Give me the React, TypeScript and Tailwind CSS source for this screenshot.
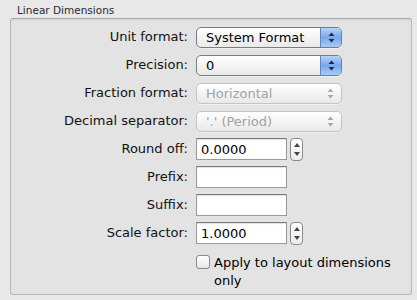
import React from "react";

const font = { fontFamily: '"DejaVu Sans", "Liberation Sans", sans-serif' };

const Arrows = ({ color }: { color: string }) => (
  <svg width="7" height="11" viewBox="0 0 7 11">
    <path d="M3.5 0.5 L6.5 4 L0.5 4 Z" fill={color} />
    <path d="M3.5 10.5 L6.5 7 L0.5 7 Z" fill={color} />
  </svg>
);

const Popup = ({ value, disabled }: { value: string; disabled?: boolean }) => (
  <div
    className={`flex h-[21px] w-[146px] items-stretch rounded-[5px] border ${
      disabled ? "border-[#c4c4c4] text-[#a2a2a2]" : "border-[#7c7c7c] text-black"
    } bg-gradient-to-b from-white via-[#f4f4f4] to-[#e9e9e9] shadow-[0_1px_0_rgba(255,255,255,0.5)] overflow-hidden`}
  >
    <div className="flex flex-1 items-center pl-[9px] leading-none">{value}</div>
    {disabled ? (
      <div className="flex w-[21px] items-center justify-center">
        <Arrows color="#a8a8a8" />
      </div>
    ) : (
      <div className="flex w-[21px] items-center justify-center border-l border-[#5d86c4] bg-gradient-to-b from-[#b8d3f6] via-[#78a8ec] to-[#a7cbf6]">
        <Arrows color="#1c2a44" />
      </div>
    )}
  </div>
);

const Field = ({ value }: { value?: string }) => (
  <div className="flex h-[22px] w-[91px] items-center border border-[#9a9a9a] border-t-[#7a7a7a] bg-white pl-[4px] leading-none text-black shadow-[inset_0_1px_1px_rgba(0,0,0,0.12)]">
    {value}
  </div>
);

const Stepper = () => (
  <div className="ml-[3px] flex h-[23px] w-[13px] flex-col items-center justify-center gap-[5px] rounded-[4px] border border-[#8a8a8a] bg-gradient-to-b from-white to-[#ececec]">
    <svg width="6" height="4" viewBox="0 0 6 4">
      <path d="M3 0 L6 4 L0 4 Z" fill="#444" />
    </svg>
    <svg width="6" height="4" viewBox="0 0 6 4">
      <path d="M3 4 L6 0 L0 0 Z" fill="#444" />
    </svg>
  </div>
);

const rows: { label: string; control: React.ReactNode }[] = [
  { label: "Unit format:", control: <Popup value="System Format" /> },
  { label: "Precision:", control: <Popup value="0" /> },
  { label: "Fraction format:", control: <Popup value="Horizontal" disabled /> },
  { label: "Decimal separator:", control: <Popup value="'.' (Period)" disabled /> },
  { label: "Round off:", control: <div className="flex items-center"><Field value="0.0000" /><Stepper /></div> },
  { label: "Prefix:", control: <Field /> },
  { label: "Suffix:", control: <Field /> },
  { label: "Scale factor:", control: <div className="flex items-center"><Field value="1.0000" /><Stepper /></div> },
];

export default function App() {
  return (
    <div className="h-[300px] w-[417px] bg-[#e8e8e8] pt-[4px]" style={font}>
      <div className="pl-[17px] text-[10.5px] leading-[13px] text-[#2a2a2a]">Linear Dimensions</div>
      <div className="ml-[10px] mt-[1px] h-[277px] w-[402px] rounded-[3px] border border-[#b9b9b9] border-t-[#a9a9a9] bg-[#e3e3e3] pt-[4px] text-[13px] shadow-[inset_0_1px_2px_rgba(0,0,0,0.08)]">
        <div className="grid grid-cols-[177px_1fr] gap-x-[8px]">
          {rows.map((r, i) => (
            <React.Fragment key={i}>
              <div className="flex h-[28px] items-center justify-end text-[#111]">{r.label}</div>
              <div className="flex h-[28px] items-center">{r.control}</div>
            </React.Fragment>
          ))}
          <div />
          <div className="flex items-start pt-[7px]">
            <div className="mt-[1px] h-[14px] w-[14px] shrink-0 rounded-[3px] border border-[#8a8a8a] bg-gradient-to-b from-white to-[#e6e6e6]" />
            <div className="ml-[4px] w-[190px] leading-[18px] text-black">Apply to layout dimensions only</div>
          </div>
        </div>
      </div>
    </div>
  );
}
